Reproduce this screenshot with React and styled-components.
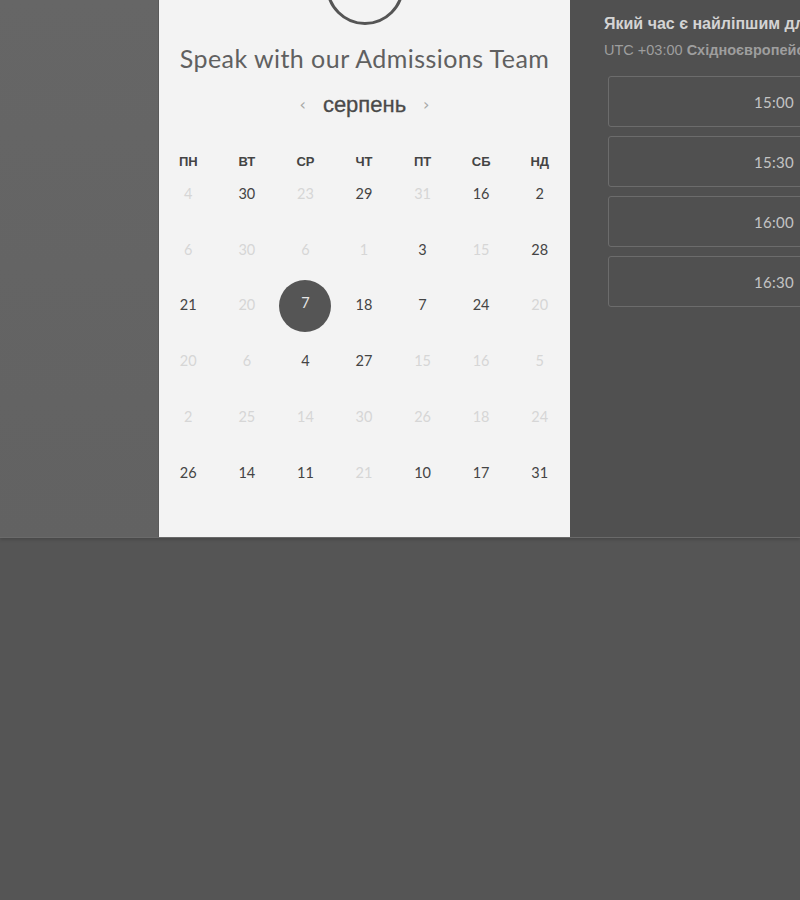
import React from "react";
import styled, { createGlobalStyle } from "styled-components";

const GlobalStyle = createGlobalStyle`
  html, body {
    margin: 0;
    padding: 0;
    background: #555555;
    overflow: hidden;
  }
  body {
    font-family: "Lato", "Liberation Sans", sans-serif;
  }
`;

const Page = styled.div`
  width: 800px;
  height: 900px;
  overflow: hidden;
  background: #555555;
`;

const Top = styled.div`
  display: flex;
  height: 537px;
  box-shadow: 0 2px 3px rgba(0, 0, 0, 0.15);
  position: relative;
  border-bottom: 1px solid #6a6a6a;
`;

const SidePanel = styled.div`
  width: 158px;
  flex-shrink: 0;
  background: linear-gradient(#666666, #626262);
`;

const Card = styled.div`
  width: 412px;
  flex-shrink: 0;
  background: #f3f3f3;
  border-left: 1px solid #5a5a5a;
  box-sizing: border-box;
  display: flex;
  flex-direction: column;
  align-items: center;
`;

const Avatar = styled.div`
  width: 78px;
  height: 78px;
  box-sizing: border-box;
  border: 3px solid #555555;
  border-radius: 50%;
  margin-top: -53px;
  flex-shrink: 0;
`;

const Heading = styled.h1`
  margin: 17px 0 0;
  font-family: "Lato", sans-serif;
  font-weight: 400;
  font-size: 25px;
  letter-spacing: 0.45px;
  line-height: 32px;
  color: #606060;
  white-space: nowrap;
`;

const MonthRow = styled.div`
  margin-top: 19px;
  display: flex;
  align-items: center;
  gap: 17px;
  height: 24px;
`;

const Chevron = styled.span`
  font-family: "DejaVu Sans", sans-serif;
  font-size: 16px;
  color: #a8a8a8;
  line-height: 24px;
`;

const Month = styled.span`
  font-family: "Liberation Sans", Arial, sans-serif;
  font-size: 22px;
  color: #4a4a4a;
  line-height: 24px;
  font-weight: 400;
  -webkit-text-stroke: 0.3px #4a4a4a;
`;

const Grid = styled.div`
  align-self: stretch;
  display: grid;
  grid-template-columns: repeat(7, 1fr);
  padding: 0 1px 0 0;
`;

const WeekHead = styled.div`
  margin-top: 39px;
  height: 12px;
  line-height: 12px;
  text-align: center;
  font-family: "Liberation Sans", Arial, sans-serif;
  font-weight: 700;
  font-size: 13px;
  color: #444444;
`;

const Days = styled(Grid)`
  row-gap: 3.8px;
`;

const DayCell = styled.div`
  height: 52px;
  display: flex;
  align-items: center;
  justify-content: center;
`;

const Day = styled.span`
  width: 52px;
  height: 52px;
  border-radius: 50%;
  display: flex;
  align-items: center;
  justify-content: center;
  font-family: "Lato", sans-serif;
  font-size: 14.5px;
  color: ${(p) => (p.$selected ? "#e8e8e8" : p.$muted ? "#d6d6d6" : "#444444")};
  background: ${(p) => (p.$selected ? "#555555" : "transparent")};
  line-height: 1;
  padding-bottom: ${(p) => (p.$selected ? "4px" : "0")};
  box-sizing: border-box;
`;

const RightPanel = styled.div`
  width: 400px;
  flex-shrink: 0;
  background: #505050;
  padding: 15px 0 0 34px;
  box-sizing: border-box;
`;

const Question = styled.div`
  font-family: "Liberation Sans", Arial, sans-serif;
  font-weight: 700;
  font-size: 16px;
  line-height: 18px;
  color: #d4d4d4;
  white-space: nowrap;
`;

const Zone = styled.div`
  margin-top: 9px;
  font-family: "Liberation Sans", Arial, sans-serif;
  font-size: 14.5px;
  line-height: 17px;
  color: #9e9e9e;
  white-space: nowrap;
  b {
    font-weight: 700;
  }
`;

const Slots = styled.div`
  margin: 17px 0 0 4px;
  display: flex;
  flex-direction: column;
  gap: 9px;
`;

const Slot = styled.button`
  width: 332px;
  height: 51px;
  box-sizing: border-box;
  border: 1px solid #6c6c6c;
  border-radius: 3px;
  background: transparent;
  font-family: "Lato", sans-serif;
  font-size: 15px;
  color: #c4c4c4;
  letter-spacing: 0.3px;
`;

const weekdays = ["ПН", "ВТ", "СР", "ЧТ", "ПТ", "СБ", "НД"];

// m = muted, s = selected
const days = [
  ["4m", "30", "23m", "29", "31m", "16", "2"],
  ["6m", "30m", "6m", "1m", "3", "15m", "28"],
  ["21", "20m", "7s", "18", "7", "24", "20m"],
  ["20m", "6m", "4", "27", "15m", "16m", "5m"],
  ["2m", "25m", "14m", "30m", "26m", "18m", "24m"],
  ["26", "14", "11", "21m", "10", "17", "31"],
];

const slots = ["15:00", "15:30", "16:00", "16:30"];

export default function App() {
  return (
    <Page>
      <GlobalStyle />
      <Top>
        <SidePanel />
        <Card>
          <Avatar />
          <Heading>Speak with our Admissions Team</Heading>
          <MonthRow>
            <Chevron>‹</Chevron>
            <Month>серпень</Month>
            <Chevron>›</Chevron>
          </MonthRow>
          <Grid>
            {weekdays.map((w) => (
              <WeekHead key={w}>{w}</WeekHead>
            ))}
          </Grid>
          <Days>
            {days.flat().map((d, i) => {
              const num = d.replace(/[ms]/, "");
              return (
                <DayCell key={i}>
                  <Day $muted={d.endsWith("m")} $selected={d.endsWith("s")}>
                    {num}
                  </Day>
                </DayCell>
              );
            })}
          </Days>
        </Card>
        <RightPanel>
          <Question>Який час є найліпшим для вас?</Question>
          <Zone>
            UTC +03:00 <b>Східноєвропейський час</b>
          </Zone>
          <Slots>
            {slots.map((s) => (
              <Slot key={s}>{s}</Slot>
            ))}
          </Slots>
        </RightPanel>
      </Top>
    </Page>
  );
}
